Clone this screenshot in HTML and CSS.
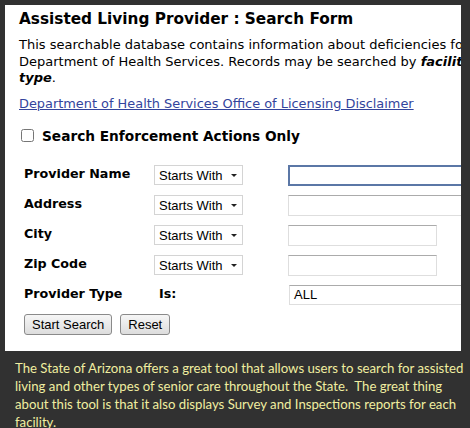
FILE: index.html
```
<!DOCTYPE html>
<html lang="en">
  <head>
    <meta charset="UTF-8" />
    <title>Assisted Living Provider : Search Form</title>
    <link rel="stylesheet" href="styles.css">
  </head>
  <body>
    <div class="panel">
      <h2>Assisted Living Provider : Search Form</h2>
      <p class="intro">
        This searchable database contains information about deficiencies found by the Arizona<br />
        Department of Health Services. Records may be searched by <b><i>facility name</i></b>, <b><i>city</i></b>, or<br />
        <b><i>type</i></b>.
      </p>
      <a class="disclaimer" href="#">Department of Health Services Office of Licensing Disclaimer</a>

      <label class="enforcement">
        <input type="checkbox" />
        <span>Search Enforcement Actions Only</span>
      </label>

      <form class="search-form">
        <div class="row">
          <span class="field-label">Provider Name</span>
          <div class="select-wrap">
            <select><option>Starts With</option></select>
          </div>
          <input type="text" class="txt wide focused" />
        </div>
        <div class="row">
          <span class="field-label">Address</span>
          <div class="select-wrap">
            <select><option>Starts With</option></select>
          </div>
          <input type="text" class="txt wide" />
        </div>
        <div class="row">
          <span class="field-label">City</span>
          <div class="select-wrap">
            <select><option>Starts With</option></select>
          </div>
          <input type="text" class="txt" />
        </div>
        <div class="row">
          <span class="field-label">Zip Code</span>
          <div class="select-wrap">
            <select><option>Starts With</option></select>
          </div>
          <input type="text" class="txt" />
        </div>
        <div class="row">
          <span class="field-label">Provider Type</span>
          <span class="field-label is">Is:</span>
          <div class="type-box">ALL</div>
        </div>
        <div class="btn-container">
          <button type="button">Start Search</button>
          <button type="reset">Reset</button>
        </div>
      </form>
    </div>

    <p class="caption">
      The State of Arizona offers a great tool that allows users to search for assisted<br />
      living and other types of senior care throughout the State.&nbsp; The great thing<br />
      about this tool is that it also displays Survey and Inspections reports for each<br />
      facility.
    </p>
  </body>
</html>
```

FILE: styles.css
```
body {
  margin: 0;
  padding: 5px 0 0 5px;
  background: #313131;
  width: 470px;
  height: 428px;
  box-sizing: border-box;
  overflow: hidden;
}
.panel {
  background: white;
  width: 456px;
  height: 346px;
  overflow: hidden;
  box-sizing: border-box;
  padding: 0 0 0 14px;
  font-family: "DejaVu Sans", Verdana, sans-serif;
  color: #000;
  white-space: nowrap;
}
h2 {
  font-size: 15.3px;
  margin: 0;
  padding-top: 4px;
  line-height: 20px;
}
.intro {
  font-size: 13px;
  line-height: 16.5px;
  margin: 8px 0 0;
}
.disclaimer {
  display: block;
  font-size: 12.9px;
  color: #33449c;
  margin-top: 9px;
}
.enforcement {
  display: flex;
  align-items: center;
  margin-top: 17px;
  font-size: 13.7px;
  font-weight: bold;
}
.enforcement input {
  width: 13px;
  height: 13px;
  margin: 0 8px 0 2px;
}
.search-form {
  margin-top: 21px;
  padding-left: 5px;
}
.row {
  display: grid;
  grid-template-columns: 130px 134px 1fr;
  align-items: start;
  height: 30px;
}
.field-label {
  font-size: 12.7px;
  font-weight: bold;
  padding-top: 1px;
}
.is {
  padding-left: 5px;
}
.select-wrap {
  position: relative;
  width: 89px;
  height: 20px;
}
.select-wrap select {
  appearance: none;
  width: 100%;
  height: 100%;
  margin: 0;
  padding: 0 0 0 4px;
  border: 1px solid #d4d4d4;
  border-radius: 0;
  background: white;
  font-family: "Liberation Sans", Arial, sans-serif;
  font-size: 13px;
  color: #000;
}
.select-wrap::after {
  content: "";
  position: absolute;
  right: 6px;
  top: 9px;
  border-left: 3px solid transparent;
  border-right: 3px solid transparent;
  border-top: 3px solid #222;
}
.txt {
  width: 149px;
  height: 21px;
  margin: 0;
  box-sizing: border-box;
  border: 1px solid #dedede;
  border-top-color: #ababab;
}
.txt.wide {
  width: 220px;
}
.txt.focused {
  border: 2px solid #5b77a6;
}
.type-box {
  width: 220px;
  height: 20px;
  box-sizing: border-box;
  margin-left: 1px;
  border: 1px solid #dedede;
  border-top-color: #ababab;
  font-family: "Liberation Sans", Arial, sans-serif;
  font-size: 13px;
  line-height: 18px;
  padding-left: 4px;
}
.btn-container {
  display: flex;
  gap: 8px;
  margin-top: -1px;
}
button {
  height: 21px;
  padding: 0 7px;
  font-family: "Liberation Sans", Arial, sans-serif;
  font-size: 13px;
  color: #000;
  border: 1px solid #8a8a8a;
  border-radius: 3px;
  background: linear-gradient(#f6f6f6, #dddddd);
}
.caption {
  margin: 8px 0 0 10px;
  font-family: Lato, "Open Sans", sans-serif;
  font-size: 13.2px;
  line-height: 18px;
  color: #f0eea0;
  white-space: nowrap;
}
```
